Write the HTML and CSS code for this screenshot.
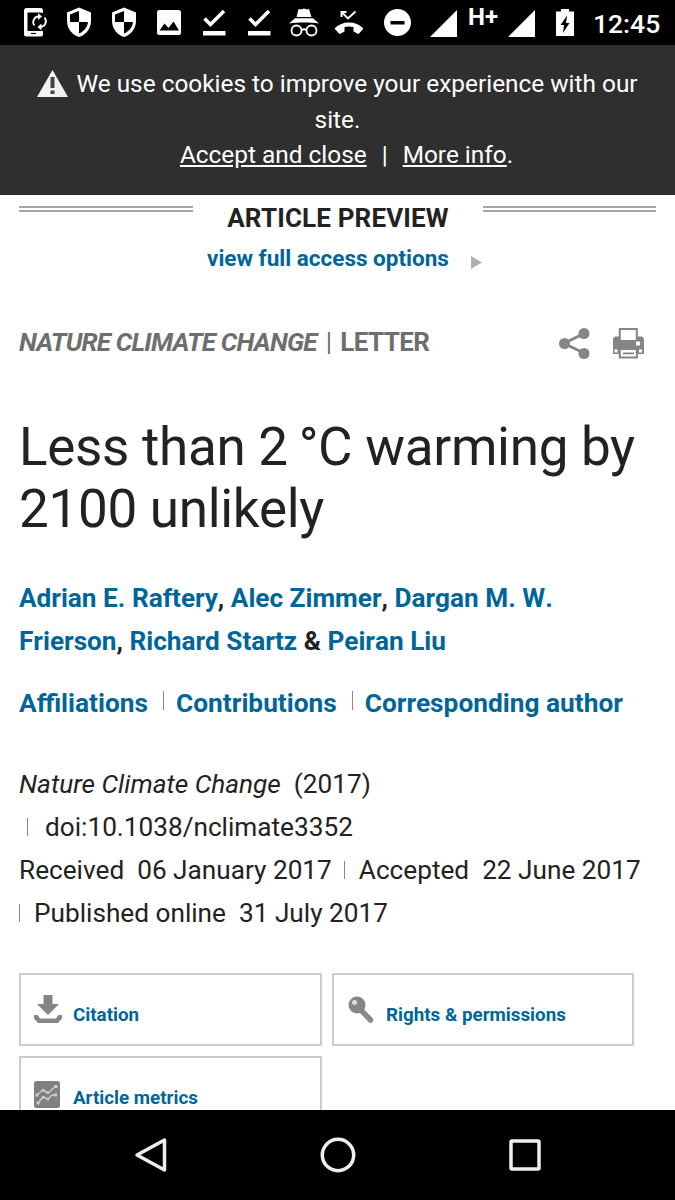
FILE: index.html
```html
<!DOCTYPE html>
<html lang="en">
<head>
	<meta charset="utf-8">
	<title>Less than 2 °C warming by 2100 unlikely</title>
	<link rel="stylesheet" href="styles.css">
</head>
<body>
	<div class="status-bar">
		<svg class="cell" viewBox="0 0 45 45">
			<path d="M31 13v-2.500a2.500 2.500 0 0 0-2.500-2.500H14.500a2.500 2.500 0 0 0-2.500 2.500v23.500a2.500 2.500 0 0 0 2.500 2.500h14a2.500 2.500 0 0 0 2.500-2.500V31H15.500V12.500H28z" fill="#fff"/>
			<path d="M19 33.500h5" stroke="#000" stroke-width="1.200"/>
			<path d="M22.500 25.500a5.500 5.500 0 0 1 4-9M32.500 17.500a5.800 5.800 0 0 1-3.500 9.500" fill="none" stroke="#fff" stroke-width="1.800"/>
			<path d="M26 13l4 3.500-4 3.500zM29.500 23.500v7l-4-3.500z" fill="#fff"/>
		</svg>
		<svg class="cell" viewBox="0 0 45 45">
			<path d="M22 7.500l12 5v8c0 8-4.500 14-12 16.500C14.500 34.500 10 28.500 10 20.500v-8z" fill="#fff"/>
			<path d="M22 11v11h-9v-7.500zM22 22h9c-.5 5-4 9.500-9 11.500z"/>
		</svg>
		<svg class="cell" viewBox="0 0 45 45">
			<path d="M22 7.500l12 5v8c0 8-4.500 14-12 16.500C14.500 34.500 10 28.500 10 20.500v-8z" fill="#fff"/>
			<path d="M22 11v11h-9v-7.500zM22 22h9c-.5 5-4 9.500-9 11.500z"/>
		</svg>
		<svg class="cell" viewBox="0 0 45 45">
			<rect x="10" y="10" width="24" height="25" rx="2.500" fill="#fff"/>
			<path d="M12.500 30.500l5-7 4 4.500 5-6.500 5.500 9z"/>
		</svg>
		<svg class="cell" viewBox="0 0 45 45">
			<path d="M12.500 18.500l6 6L32 11" fill="none" stroke="#fff" stroke-width="3.600"/>
			<rect x="11" y="31" width="22.500" height="4.500" fill="#fff"/>
		</svg>
		<svg class="cell" viewBox="0 0 45 45">
			<path d="M12.500 18.500l6 6L32 11" fill="none" stroke="#fff" stroke-width="3.600"/>
			<rect x="11" y="31" width="22.500" height="4.500" fill="#fff"/>
		</svg>
		<svg class="cell" viewBox="0 0 45 45">
			<path d="M14.500 17l2-8 2.500.5 3-1 3 1 2-.5 2.500 8zM13 18.300h18l6 5.200c-9-1.200-21-1.200-30 0z" fill="#fff"/>
			<circle cx="14.500" cy="30.500" r="5" fill="none" stroke="#fff" stroke-width="1.800"/>
			<circle cx="29.500" cy="30.500" r="5" fill="none" stroke="#fff" stroke-width="1.800"/>
			<path d="M19.500 30q2.500-1.500 5 0" fill="none" stroke="#fff" stroke-width="1.800"/>
		</svg>
		<svg class="cell" viewBox="0 0 45 45">
			<path d="M14.500 12l6.500 6.500 7.500-7M14.500 17v-5h5" fill="none" stroke="#fff" stroke-width="1.900"/>
			<path d="M22 22.500c6 0 10 2 13.500 5 .7.700.7 1.500 0 2.200l-3.500 3.800c-.5.500-1.200.500-1.800.1-1.200-1-2.500-1.700-3.700-2.200v-4.400c-3-.8-6-.8-9 0v4.400c-1.200.5-2.500 1.200-3.700 2.200-.6.400-1.300.4-1.800-.1l-3.500-3.800c-.7-.7-.7-1.500 0-2.200 3.500-3 7.500-5 13.500-5z" fill="#fff"/>
		</svg>
		<svg class="cell dnd" viewBox="0 0 45 45">
			<circle cx="22.500" cy="22.500" r="13.500" fill="#fff"/>
			<rect x="15.500" y="21" width="14" height="3.500"/>
		</svg>
		<svg class="signal" viewBox="0 0 27 27"><path d="M27 0v27H0z" fill="#fff"/></svg>
		<span class="network">H+</span>
		<svg class="signal" viewBox="0 0 27 27"><path d="M27 0v27H0z" fill="#fff"/></svg>
		<svg class="battery" viewBox="0 0 18 27">
			<path d="M5 0h8v2.500h5V27H0V2.500h5z" fill="#fff"/>
			<path d="M11 6.500L4.500 16H8l-1 8 6.500-10H10z"/>
		</svg>
		<span class="clock">12:45</span>
	</div>

	<div class="cookies">
		<p>
			<svg class="warning" viewBox="0 0 31 27">
				<path d="M15.500 0L31 27H0z" fill="#f2f2f2"/>
				<path d="M13.500 7h4v11h-4zM13.500 20.500h4v3.500h-4z" fill="#444"/>
			</svg>
			We use cookies to improve your experience with our site.
		</p>
		<p class="cookie-links"><a href="#">Accept and close</a><span class="bar">|</span><a href="#">More info</a>.</p>
	</div>

	<div class="article">
		<div class="preview">
			<span class="rule"></span>
			<h2>ARTICLE PREVIEW</h2>
			<span class="rule"></span>
		</div>
		<div class="access">
			<a href="#">view full access options</a>
			<svg class="arrow" viewBox="0 0 11 13"><path d="M0 0l11 6.500L0 13z" fill="#a9b2bb"/></svg>
		</div>

		<div class="journal">
			<div class="journal-name"><i>NATURE CLIMATE CHANGE</i><span class="divider">|</span><span class="type">LETTER</span></div>
			<svg class="share" viewBox="0 0 31 31">
				<path d="M25 5.500L5 15.500l20 9.500" fill="none" stroke="#858585" stroke-width="3"/>
				<circle cx="25" cy="5.500" r="5.500" fill="#858585"/>
				<circle cx="5.500" cy="15.500" r="5.500" fill="#858585"/>
				<circle cx="25" cy="25.500" r="5.500" fill="#858585"/>
			</svg>
			<svg class="print" viewBox="0 0 31 31">
				<path d="M2 8.500h27l2 2V26H0V10.500z" fill="#858585"/>
				<path d="M6.800 1h17v12h-17zM6.800 21h17v8.500h-17z" fill="#fff" stroke="#858585" stroke-width="2"/>
				<path d="M5.800 12h19v2h-19zM10 24.500h11v1.800H10z" fill="#858585"/>
				<path d="M23 13.500h4v4h-4zM1.500 21.500h3v3h-3zM26 21.500h3v3h-3z" fill="#fff"/>
			</svg>
		</div>

		<h1>Less than 2 <span class="degree">°C</span> warming by 2100 unlikely</h1>

		<p class="authors"><a href="#">Adrian E. Raftery</a>, <a href="#">Alec Zimmer</a>, <a href="#">Dargan M. W. Frierson</a>, <a href="#">Richard Startz</a> &amp; <a href="#">Peiran Liu</a></p>

		<div class="info-links">
			<a href="#">Affiliations</a>
			<a href="#">Contributions</a>
			<a href="#">Corresponding author</a>
		</div>

		<div class="citation">
			<div><i>Nature Climate Change</i><span class="value">(2017)</span></div>
			<div><span class="sep doi"></span>doi:10.1038/nclimate3352</div>
			<div>Received<span class="value">06 January 2017</span><span class="sep accepted"></span>Accepted<span class="value">22 June 2017</span></div>
			<div><span class="sep published"></span>Published online<span class="value">31 July 2017</span></div>
		</div>

		<div class="tools">
			<a href="#">
				<svg viewBox="0 0 30 30">
					<path d="M10.500 1h9v9H26L15 21 4 10h6.500z" fill="#858585"/>
					<path d="M1 21h3.500l2.500 3.500h16l2.500-3.500H29v3.500L25 29H5l-4-4.500z" fill="#858585"/>
				</svg>
				Citation
			</a>
			<a href="#">
				<svg viewBox="0 0 30 30">
					<path d="M13 14l11.500 12" stroke="#8a8a8a" stroke-width="5.500" stroke-linecap="round"/>
					<circle cx="11" cy="11" r="8.500" fill="#858585"/>
					<circle cx="8.500" cy="8.500" r="2.500" fill="#ddd"/>
				</svg>
				Rights &amp; permissions
			</a>
			<a href="#">
				<svg class="metrics" viewBox="0 0 30 30">
					<rect x="1" y="2" width="26" height="27" rx="2.500" fill="#808080"/>
					<path d="M4 16l6-5 5 3 8-7M5 24l5-6 5 2 4-4h4" fill="none" stroke="#ccc" stroke-width="1.500"/>
					<path d="M2.500 14.500h3v3h-3zM21 6h3.500v3H21zM3.500 22.500h3v3h-3zM21 14.500h3v3h-3zM9 10h2.500v2.500H9zM13.500 12.500H16V15h-2.500zM9 17h2.500v2.500H9zM13.500 19H16v2.500h-2.500z" fill="#ccc"/>
				</svg>
				Article metrics
			</a>
		</div>
	</div>

	<div class="nav-bar">
		<svg viewBox="0 0 36 36"><path d="M31.500 3v30L4 18z"/></svg>
		<svg viewBox="0 0 36 36"><circle cx="18" cy="18" r="15.700"/></svg>
		<svg viewBox="0 0 36 36"><rect x="4" y="4" width="28" height="28" rx="1"/></svg>
	</div>
</body>
</html>
```

FILE: styles.css
```css
* {
	margin: 0;
	padding: 0;
	box-sizing: border-box;
}

body {
	width: 675px;
	height: 1200px;
	overflow: hidden;
	display: flex;
	flex-direction: column;
	font-family: Roboto, sans-serif;
	background: #fff;
	color: #222;
}

a {
	color: #069;
	text-decoration: none;
}

svg {
	display: block;
	flex: none;
}

/* Android status bar */
.status-bar {
	height: 45px;
	flex: none;
	padding-left: 12px;
	display: flex;
	background: #000;
	color: #fff;
}

.cell {
	width: 45px;
	height: 45px;
}

.dnd {
	margin-left: 3px;
}

.signal {
	width: 27px;
	height: 27px;
	margin: 10px 0 0 10px;
}

.network {
	width: 41px;
	padding-left: 11px;
	font-size: 24px;
	font-weight: 700;
	line-height: 34px;
}

.battery {
	width: 18px;
	height: 27px;
	margin: 9px 0 0 21px;
}

.clock {
	margin-left: 19px;
	font-size: 26.5px;
	font-weight: 500;
	line-height: 47px;
}

/* Cookie notice */
.cookies {
	height: 150px;
	flex: none;
	padding: 21px 32px 0;
	background: #2f2f2f;
	color: #fff;
	font-size: 24.4px;
	line-height: 35.7px;
	text-align: center;
}

.cookies a {
	color: #fff;
	text-decoration: underline;
}

.warning {
	display: inline-block;
	width: 31px;
	height: 27px;
	margin-right: 2px;
	vertical-align: -5px;
}

.cookie-links {
	padding-left: 18px;
}

.bar {
	margin: 0 15px;
}

/* Article */
.article {
	flex: 1;
	min-height: 0;
	overflow: hidden;
	padding: 0 19px;
}

.preview {
	height: 46px;
	display: flex;
	justify-content: space-between;
}

.preview h2 {
	font-size: 26px;
	line-height: 46px;
	letter-spacing: 0.15px;
}

.rule {
	width: 173px;
	height: 6px;
	margin-top: 11px;
	border-top: 2px solid #a1a6ad;
	border-bottom: 2px solid #a1a6ad;
}

.rule:first-child {
	width: 174px;
}

.access {
	height: 36px;
	padding-left: 188px;
	display: flex;
	font-size: 22.5px;
	font-weight: 700;
	line-height: 34px;
}

.arrow {
	width: 11px;
	height: 13px;
	margin: 15px 0 0 22px;
}

.journal {
	margin-top: 45px;
	height: 40px;
	display: flex;
	color: #6e6e6e;
}

.journal-name {
	width: 539.5px;
	font-size: 26px;
	font-weight: 700;
	line-height: 40px;
	letter-spacing: -0.8px;
}

.divider {
	margin: 0 9px;
	font-weight: 400;
}

.type {
	letter-spacing: -0.6px;
}

.share,
.print {
	width: 31px;
	height: 31px;
	margin-top: 6px;
}

.print {
	margin-left: 23px;
}

h1 {
	margin-top: 54px;
	font-size: 53px;
	font-weight: 400;
	line-height: 62px;
	letter-spacing: -0.3px;
}

.degree {
	margin-left: -2px;
}

.authors {
	margin-top: 37px;
	padding-right: 60px;
	font-size: 26.2px;
	font-weight: 700;
	line-height: 43px;
	font-kerning: none;
}

.info-links {
	margin-top: 19px;
	display: flex;
	font-size: 26.3px;
	font-weight: 700;
	line-height: 43px;
}

.info-links a + a {
	margin-left: 15px;
	padding-left: 13px;
	background: linear-gradient(#888, #888) no-repeat 0 9px / 1px 19px;
}

.citation {
	margin-top: 38px;
	font-size: 26.2px;
	line-height: 43px;
	white-space: nowrap;
}

.value {
	margin-left: 13px;
}

.sep {
	display: inline-block;
	width: 1px;
	height: 18px;
	background: #888;
}

.doi {
	margin: 0 17px 0 8px;
}

.accepted {
	margin: 0 14px 0 12px;
}

.published {
	margin-right: 14px;
}

.tools {
	width: 615px;
	margin-top: 38px;
	display: grid;
	grid-template-columns: 303px 302px;
	gap: 10px;
}

.tools a {
	height: 73px;
	padding: 19px 0 0 12px;
	border: 2px solid #ccc;
	display: flex;
	font-size: 18.8px;
	font-weight: 700;
	line-height: 43px;
}

.tools svg {
	width: 30px;
	height: 30px;
	margin-right: 10px;
}

.tools .metrics {
	margin-top: 2px;
}

/* Android navigation keys */
.nav-bar {
	height: 90px;
	flex: none;
	display: flex;
	justify-content: center;
	align-items: center;
	gap: 151px;
	background: #000;
}

.nav-bar svg {
	width: 36px;
	height: 36px;
	fill: none;
	stroke: #eee;
	stroke-width: 3.5;
	stroke-linejoin: round;
}
```
